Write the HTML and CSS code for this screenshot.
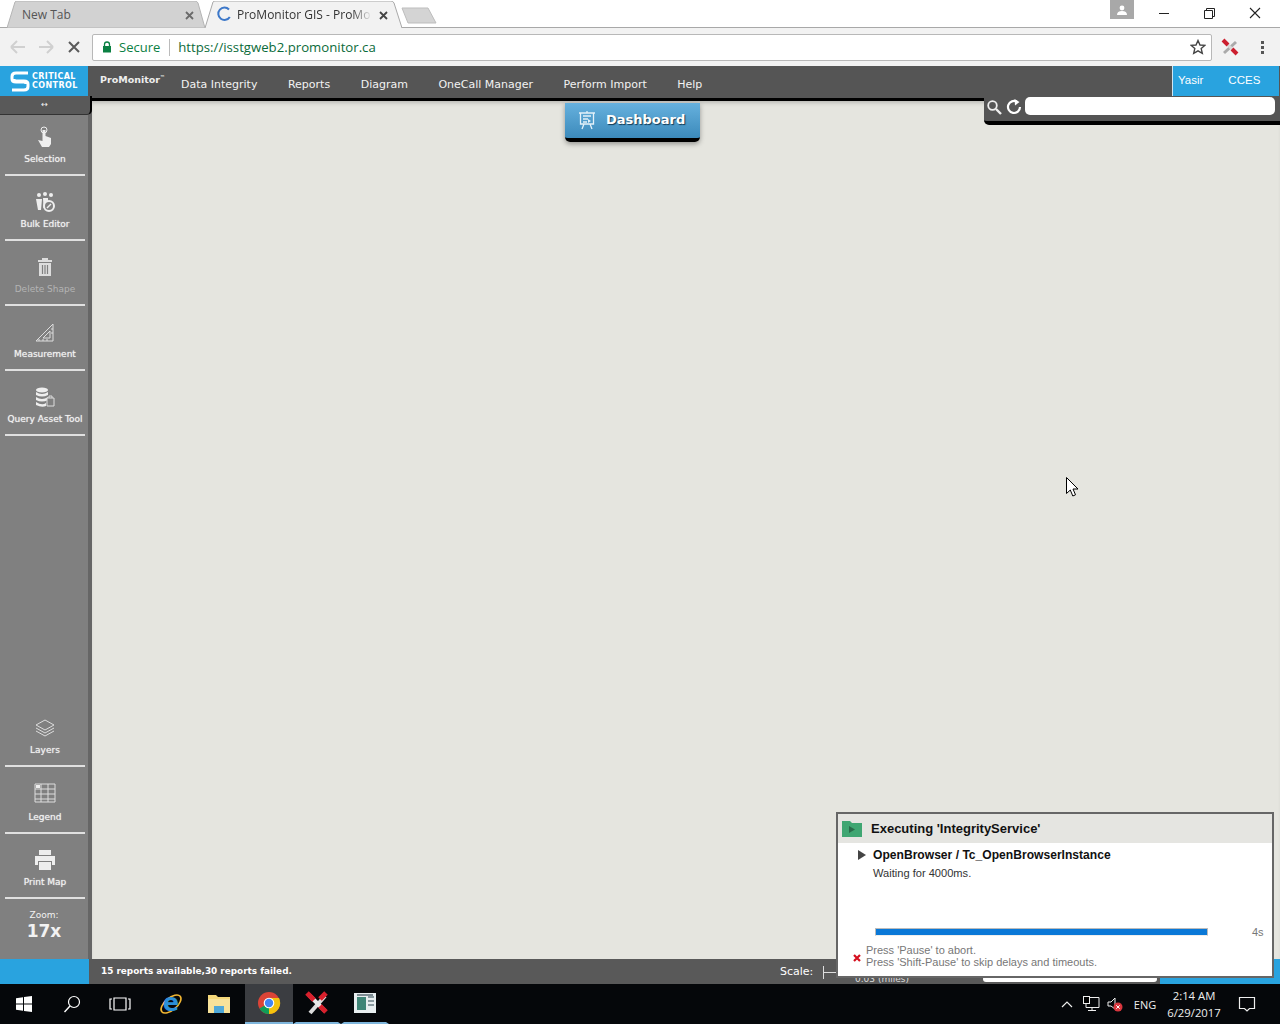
FILE: index.html
```html
<!DOCTYPE html>
<html lang="en">
<head>
    <meta charset="UTF-8">
    <title>ProMonitor GIS - ProMonitor</title>
    <link rel="stylesheet" href="styles.css">
</head>
<body>
<div class="screen">
    <div class="tabstrip">
        <div class="tab tab-back">
            <svg class="tab-shape" viewBox="0 0 198 27" preserveAspectRatio="none"><path d="M0 27 L8 1 Q8.500 0 10 0 H188 Q190 0 191 2 L198 27 Z" fill="#d2d2d2" stroke="#b4b4b4"/></svg>
            <span class="tab-title">New Tab</span>
            <svg class="tab-close" viewBox="0 0 9 9"><path d="M1 1 L8 8 M8 1 L1 8" stroke="#6a6a6a" stroke-width="1.800"/></svg>
        </div>
        <div class="tab tab-front">
            <svg class="tab-shape" viewBox="0 0 197 27" preserveAspectRatio="none"><path d="M0 27 L8 1 Q8.500 0 10 0 H186 Q188 0 189 2 L197 27" fill="#f2f2f2" stroke="#a8a8a8"/></svg>
            <svg class="spinner" viewBox="0 0 16 16"><path d="M13 3.500 A6.200 6.200 0 1 0 13.800 11" fill="none" stroke="#3d78c9" stroke-width="2"/></svg>
            <span class="tab-title tab-fade">ProMonitor GIS - ProMo</span>
            <svg class="tab-close" viewBox="0 0 9 9"><path d="M1 1 L8 8 M8 1 L1 8" stroke="#444" stroke-width="1.800"/></svg>
        </div>
        <svg class="newtab" viewBox="0 0 36 17"><path d="M1 1 H27 L35 16 H7 Z" fill="#d4d4d4" stroke="#bdbdbd"/></svg>
        <div class="window-controls">
            <div class="profile"><svg viewBox="0 0 12 10" width="12" height="10"><circle cx="6" cy="3" r="2.400" fill="#fff"/><path d="M1 10 Q1 6 6 6 Q11 6 11 10 Z" fill="#fff"/></svg></div>
            <svg class="winbtn" viewBox="0 0 46 18"><path d="M19 8.500 H29" stroke="#222"/></svg>
            <svg class="winbtn" viewBox="0 0 46 18"><path d="M18.500 5.500 H26.500 V13.500 H18.500 Z M20.500 5.500 V3.500 H28.500 V11.500 H26.500" fill="none" stroke="#222"/></svg>
            <svg class="winbtn" viewBox="0 0 46 18"><path d="M18 3 L28 13 M28 3 L18 13" stroke="#222" stroke-width="1.100"/></svg>
        </div>
    </div>

    <div class="toolbar">
        <svg class="navbtn" viewBox="0 0 28 28"><path d="M7 14 H21 M7 14 L13 8 M7 14 L13 20" fill="none" stroke="#d0d0d0" stroke-width="2"/></svg>
        <svg class="navbtn" viewBox="0 0 28 28"><path d="M7 14 H21 M21 14 L15 8 M21 14 L15 20" fill="none" stroke="#d0d0d0" stroke-width="2"/></svg>
        <svg class="navbtn" viewBox="0 0 28 28"><path d="M9 9 L19 19 M19 9 L9 19" fill="none" stroke="#5a5a5a" stroke-width="2"/></svg>
        <div class="omnibox">
            <svg class="lock" viewBox="0 0 10 12"><path d="M2.500 5 V3.500 A2.500 2.500 0 0 1 7.500 3.500 V5" fill="none" stroke="#0b8043" stroke-width="1.300"/><rect x="1" y="5" width="8" height="6.500" fill="#0b8043"/></svg>
            <span class="secure">Secure</span>
            <span class="url">https://isstgweb2.promonitor.ca</span>
            <svg class="star" viewBox="0 0 16 16"><path d="M8 1.500 L10 6 L14.800 6.400 L11.200 9.600 L12.300 14.300 L8 11.800 L3.700 14.300 L4.800 9.600 L1.200 6.400 L6 6 Z" fill="none" stroke="#444" stroke-width="1.400"/></svg>
        </div>
        <svg class="ext" viewBox="0 0 18 18"><path d="M3 15 L15 4" stroke="#aaa" stroke-width="3"/><path d="M3 3 L15 15" stroke="#d8d8d8" stroke-width="3"/><path d="M2 2 L7 7 M11 11 L16 16" stroke="#cc1f2f" stroke-width="4"/></svg>
        <div class="dots"><i></i><i></i><i></i></div>
    </div>

    <div class="app">
        <div class="appnav">
            <div class="logo">
                <svg viewBox="0 0 20 23" width="20" height="23"><path d="M18 3 H6 Q2 3 2 6.500 V9 Q2 12 6 12 H14 Q16 12 16 14 M2 20 H14 Q18 20 18 16.500 V14 Q18 11 14 11 H6 Q4 11 4 9" fill="none" stroke="#fff" stroke-width="3"/></svg>
                <div class="logo-text">CRITICAL<br>CONTROL</div>
            </div>
            <span class="brand">ProMonitor<sup>™</sup></span>
            <div class="menu">
                <span>Data Integrity</span>
                <span>Reports</span>
                <span>Diagram</span>
                <span>OneCall Manager</span>
                <span>Perform Import</span>
                <span>Help</span>
            </div>
            <div class="account">
                <span>Yasir</span>
                <span>CCES</span>
            </div>
        </div>

        <div class="workspace">
            <div class="sidebar">
                <div class="tools">
                    <div class="collapser">↔</div>
                    <div class="tool first">
                        <svg viewBox="0 0 22 22"><circle cx="10" cy="4" r="3" fill="none" stroke="#eee"/><path d="M8.500 4 H11.500 V10 L17 12 V18 L15 21 H8 L4 14 L8.500 15 Z" fill="#eee"/></svg>
                        <span>Selection</span>
                    </div>
                    <div class="tool">
                        <svg viewBox="0 0 22 22"><circle cx="5" cy="4" r="2" fill="#eee"/><circle cx="11" cy="3" r="2" fill="#eee"/><circle cx="17" cy="4" r="2" fill="#eee"/><path d="M2 8 H8 L7 19 H4 Z M9 7 H14 V11 L11 14 V17 H9.500 Z" fill="#eee"/><circle cx="15" cy="15" r="5" fill="#808080" stroke="#eee" stroke-width="2"/><path d="M13 17 L17 13" stroke="#eee" stroke-width="1.500"/></svg>
                        <span>Bulk Editor</span>
                    </div>
                    <div class="tool disabled">
                        <svg viewBox="0 0 22 22"><path d="M4 4 H18 V6 H4 Z M8 4 V2 H14 V4" fill="#ddd"/><path d="M5 7 H17 V20 H5 Z" fill="#ddd"/><path d="M8.500 9 V18 M11 9 V18 M13.500 9 V18" stroke="#808080" stroke-width="1.200"/></svg>
                        <span>Delete Shape</span>
                    </div>
                    <div class="tool">
                        <svg viewBox="0 0 22 22"><path d="M2 20 L19 3 V20 Z M9 17 L16 10 V17 Z" fill="none" stroke="#ddd"/><path d="M5 20 V18 M9 20 V18 M13 20 V18 M19 8 H17 M19 12 H17" stroke="#ddd"/></svg>
                        <span>Measurement</span>
                    </div>
                    <div class="tool">
                        <svg viewBox="0 0 22 22"><ellipse cx="8" cy="4" rx="6" ry="2.500" fill="#eee"/><path d="M2 6 Q8 10 14 6 V9 Q8 12 2 9 Z M2 11 Q8 15 14 11 V14 Q8 17 2 14 Z M2 16 Q8 20 12 17 V20 Q8 22 2 19 Z" fill="#eee"/><path d="M13 12 H20 V20 H13 Z" fill="#808080" stroke="#ddd"/><path d="M15 12 V10 H18 V12" fill="none" stroke="#ddd"/></svg>
                        <span>Query Asset Tool</span>
                    </div>
                </div>
                <div class="tools">
                    <div class="tool">
                        <svg viewBox="0 0 22 22"><path d="M11 3 L20 8 L11 13 L2 8 Z" fill="none" stroke="#ddd"/><path d="M2 11 L11 16 L20 11 M2 14 L11 19 L20 14" fill="none" stroke="#ddd"/></svg>
                        <span>Layers</span>
                    </div>
                    <div class="tool legend">
                        <svg viewBox="0 0 22 22"><path d="M1 2 H21 V20 H1 Z M1 7 H21 M1 12 H21 M1 17 H21 M7 2 V20 M14 2 V20" fill="none" stroke="#ddd"/><rect x="2" y="3" width="4" height="3" fill="#eee"/></svg>
                        <span>Legend</span>
                    </div>
                    <div class="tool">
                        <svg viewBox="0 0 22 22"><path d="M5 1 H17 V6 H5 Z M1 7 H21 V16 H18 V12 H4 V16 H1 Z M5 13 H17 V21 H5 Z" fill="#eee"/></svg>
                        <span>Print Map</span>
                    </div>
                    <div class="zoom">
                        <span>Zoom:</span>
                        <strong>17x</strong>
                    </div>
                </div>
            </div>
            <div class="map"></div>
        </div>

        <div class="statusbar">
            <div class="status-blue"></div>
            <span class="status-text">15 reports available,30 reports failed.</span>
            <span class="scale">Scale:</span>
            <span class="scale-line"></span>
            <span class="miles">0.03 (miles)</span>
            <span class="coords"></span>
            <div class="status-right"></div>
        </div>
    </div>

    <div class="taskbar">
        <div class="task start"><svg viewBox="0 0 16 16" width="16" height="16"><path d="M0 2.300 L7 1.300 V7.600 H0 Z M8 1.100 L16 0 V7.600 H8 Z M0 8.400 H7 V14.700 L0 13.700 Z M8 8.400 H16 V16 L8 14.900 Z" fill="#fff"/></svg></div>
        <div class="task"><svg viewBox="0 0 18 18" width="18" height="18"><circle cx="11" cy="7" r="5.500" fill="none" stroke="#fff" stroke-width="1.200"/><path d="M7 11 L1.500 17" stroke="#fff" stroke-width="1.400"/></svg></div>
        <div class="task"><svg viewBox="0 0 22 14" width="22" height="14"><path d="M5 1 H17 V13 H5 Z M3 2 H1 V12 H3 M19 2 H21 V12 H19" fill="none" stroke="#fff" stroke-width="1.200"/></svg></div>
        <div class="task ie">
            <svg viewBox="-3 -3 32 32" width="32" height="32"><ellipse cx="13" cy="13" rx="12" ry="6" transform="rotate(-40 13 13)" fill="none" stroke="#f2b632" stroke-width="1.600"/><text x="13" y="19.500" text-anchor="middle" class="ie-letter">e</text></svg>
        </div>
        <div class="task"><svg viewBox="0 0 22 20" width="22" height="20"><path d="M0 1 H8 L10 3 H22 V19 H0 Z" fill="#f4d77a"/><path d="M0 5 H22 V19 H0 Z" fill="#f7e29a"/><path d="M6 12 H16 V19 H6 Z" fill="#4fa8d8"/></svg></div>
        <div class="task chrome active">
            <svg viewBox="0 0 24 24" width="24" height="24"><circle cx="12" cy="12" r="11" fill="#db4437"/><path d="M12 12 L2.500 17.500 A11 11 0 0 0 12 23 L17.500 21 Z" fill="#0f9d58"/><path d="M12 7 H22 A11 11 0 0 1 12 23 Z" fill="#f4c20d"/><circle cx="12" cy="12" r="5.300" fill="#fff"/><circle cx="12" cy="12" r="4.200" fill="#4285f4"/></svg>
        </div>
        <div class="task running"><svg viewBox="0 0 24 24" width="24" height="24"><path d="M5 22 L20 5" stroke="#ddd" stroke-width="4"/><path d="M4 4 L20 20" stroke="#e8e8e8" stroke-width="4"/><path d="M2 2 L9 9 M15 15 L21 21 M15 8 L21 2" stroke="#d8202c" stroke-width="5"/></svg></div>
        <div class="task running"><svg viewBox="0 0 22 20" width="22" height="20"><rect width="22" height="20" fill="#e8eef0"/><rect x="3" y="4" width="9" height="13" fill="#3f8577"/><path d="M14 4 H20 M14 8 H20 M14 12 H20" stroke="#8a9aa0" stroke-width="2"/><rect x="3" y="1" width="16" height="2" fill="#7d8b92"/></svg></div>
        <div class="tray">
            <svg class="tray-icon" viewBox="0 0 24 16"><path d="M7 11 L12 6 L17 11" fill="none" stroke="#eee" stroke-width="1.200"/></svg>
            <svg class="tray-icon" viewBox="0 0 24 16"><path d="M7 1.500 H20 V11.500 H7 Z M13 11.500 V14.500 M9 14.500 H17" fill="none" stroke="#eee"/><rect x="4.500" y="0.500" width="6" height="7" fill="#000" stroke="#eee"/></svg>
            <svg class="tray-icon" viewBox="0 0 24 16"><path d="M5 6 H8 L12 2 V13 L8 10 H5 Z" fill="none" stroke="#eee"/><circle cx="15" cy="11" r="4.500" fill="#d9363e"/><path d="M13.300 9.300 L16.700 12.700 M16.700 9.300 L13.300 12.700" stroke="#fff"/></svg>
            <span class="lang">ENG</span>
            <div class="clock">
                <span>2:14 AM</span>
                <span>6/29/2017</span>
            </div>
            <svg class="notify" viewBox="0 0 18 18"><path d="M1.500 2.500 H16.500 V13.500 H11.500 L9 16 L6.500 13.500 H1.500 Z" fill="none" stroke="#eee" stroke-width="1.200"/></svg>
        </div>
    </div>

    <!-- things floating over the map -->
    <div class="dashboard-btn">
        <svg viewBox="0 0 18 20" width="18" height="20"><path d="M1 3 H17 M2.500 3 V14 H15.500 V3 M6 14 L4 19 M12 14 L14 19 M9 1 V3" fill="none" stroke="#e4f1f9" stroke-width="1.300"/><path d="M5 6 H13 M5 9 H10 M5 12 H9" stroke="#e4f1f9" stroke-width="1.500"/><path d="M10 9 L13 11 L10 13 Z" fill="#e4f1f9"/></svg>
        <span>Dashboard</span>
    </div>

    <div class="searchbox">
        <svg viewBox="0 0 16 16" width="16" height="16"><circle cx="6.500" cy="6.500" r="4.300" fill="#555" stroke="#eee" stroke-width="1.800"/><path d="M10 10 L15 15" stroke="#eee" stroke-width="2.400"/></svg>
        <svg viewBox="0 0 16 16" width="16" height="16"><path d="M11 2.800 A6 6 0 1 0 14 8" fill="none" stroke="#fff" stroke-width="2.200"/><path d="M8.500 0 L13.500 3 L9 6.500 Z" fill="#fff"/></svg>
        <div class="search-input"></div>
    </div>

    <div class="runner">
        <div class="runner-head">
            <svg viewBox="0 0 20 16" width="20" height="16"><path d="M0 0 H8 L10 2 H20 V16 H0 Z" fill="#3fa672"/><path d="M7 5 L13 8.500 L7 12 Z" fill="#2a6b4b"/></svg>
            <span>Executing 'IntegrityService'</span>
        </div>
        <div class="runner-body">
            <div class="runner-step"><i class="arrow"></i><span>OpenBrowser / Tc_OpenBrowserInstance</span></div>
            <div class="runner-wait">Waiting for 4000ms.</div>
            <div class="runner-progress">
                <div class="bar"><div class="bar-fill"></div></div>
                <span>4s</span>
            </div>
            <div class="runner-hint">
                <svg viewBox="0 0 8 8" width="8" height="8"><path d="M1 1 L7 7 M7 1 L1 7" stroke="#d5101f" stroke-width="2.200"/></svg>
                <div>Press 'Pause' to abort.<br>Press 'Shift-Pause' to skip delays and timeouts.</div>
            </div>
        </div>
    </div>

    <svg class="cursor" viewBox="0 0 13 20" width="13" height="20"><path d="M0.500 0.500 V16.500 L4.300 13 L6.800 19 L9.500 17.800 L7 12 H12 Z" fill="#fff" stroke="#000"/></svg>
</div>
</body>
</html>
```

FILE: styles.css
```css
* {
    box-sizing: border-box;
}
body {
    margin: 0;
    font-family: "Liberation Sans", Arial, sans-serif;
    overflow: hidden;
}
.screen {
    position: relative;
    width: 1280px;
    height: 1024px;
    display: flex;
    flex-direction: column;
    overflow: hidden;
    background: #fff;
}

/* browser tabs */
.tabstrip {
    height: 28px;
    display: flex;
    align-items: flex-end;
    padding-left: 7px;
    background: #fff;
    border-bottom: 1px solid #a8a8a8;
}
.tab {
    position: relative;
    height: 28px;
    display: flex;
    align-items: center;
    font-family: "Open Sans", sans-serif;
    font-size: 12px;
    margin-bottom: -1px;
}
.tab-shape {
    position: absolute;
    left: 0;
    top: 1px;
    width: 100%;
    height: 27px;
}
.tab-back {
    width: 198px;
    padding-left: 15px;
    color: #555;
}
.tab-front {
    width: 197px;
    padding-left: 11px;
    color: #333;
}
.tab-title {
    position: relative;
    flex: 1;
    white-space: nowrap;
}
.tab-fade {
    -webkit-mask-image: linear-gradient(to right, #000 85%, transparent);
    mask-image: linear-gradient(to right, #000 85%, transparent);
    margin-left: 5px;
}
.tab-close {
    position: relative;
    width: 9px;
    height: 9px;
    flex: none;
    margin: 2px 11px 0 11px;
}
.tab-front .tab-close {
    margin: 2px 14px 0 7px;
}
.spinner {
    position: relative;
    width: 16px;
    height: 16px;
    flex: none;
}
.newtab {
    width: 36px;
    height: 17px;
    margin: 0 0 3px -1px;
}
.window-controls {
    margin-left: auto;
    align-self: flex-start;
    display: flex;
    align-items: flex-start;
    padding-right: 2px;
}
.profile {
    width: 24px;
    height: 19px;
    margin-right: 6px;
    background: #a8a8a8;
    display: flex;
    align-items: center;
    justify-content: center;
}
.winbtn {
    width: 46px;
    height: 18px;
    margin-top: 5px;
}

/* address bar */
.toolbar {
    height: 38px;
    display: flex;
    align-items: center;
    padding-left: 4px;
    background: #f2f2f2;
}
.navbtn {
    width: 28px;
    height: 28px;
    flex: none;
}
.omnibox {
    width: 1120px;
    height: 27px;
    margin-left: 4px;
    display: flex;
    align-items: center;
    padding: 0 5px 0 9px;
    background: #fff;
    border: 1px solid #b8b8b8;
    border-radius: 2px;
    font-family: "Open Sans", sans-serif;
    font-size: 13px;
}
.lock {
    width: 10px;
    height: 12px;
    flex: none;
}
.secure {
    margin-left: 7px;
    padding-right: 9px;
    color: #0b8043;
    border-right: 1px solid #bbb;
    line-height: 17px;
}
.url {
    margin-left: 8px;
    font-size: 13.200px;
    color: #0b6b3a;
}
.star {
    width: 16px;
    height: 16px;
    margin-left: auto;
}
.ext {
    width: 18px;
    height: 18px;
    margin-left: 9px;
    flex: none;
}
.dots {
    margin-left: 22px;
    display: flex;
    flex-direction: column;
    gap: 2px;
}
.dots i {
    display: block;
    width: 3px;
    height: 3px;
    background: #555;
}

/* app top menu */
.app {
    flex: 1;
    display: flex;
    flex-direction: column;
    min-height: 0;
}
.appnav {
    height: 30px;
    flex: none;
    display: flex;
    background: #555;
    color: #fff;
    font-family: "DejaVu Sans", sans-serif;
}
.logo {
    width: 88px;
    flex: none;
    display: flex;
    align-items: center;
    gap: 2px;
    padding-left: 10px;
    background: #29a3df;
}
.logo-text {
    font-size: 8px;
    line-height: 9px;
    font-weight: bold;
    letter-spacing: 0.4px;
}
.brand {
    margin-left: 12px;
    margin-top: 8px;
    width: 81px;
    font-size: 9.500px;
    font-weight: bold;
    color: #eee;
}
.brand sup {
    font-size: 5px;
}
.menu {
    display: flex;
    gap: 30.500px;
    padding-top: 12px;
    font-size: 11px;
    color: #f2f2f2;
}
.account {
    margin-left: auto;
    width: 107px;
    margin-right: 1px;
    display: flex;
    gap: 25px;
    padding: 8px 0 0 5px;
    background: #29a3df;
    border-left: 1px solid #cfe6f3;
    font-family: "Liberation Sans", sans-serif;
    font-size: 11.500px;
}

/* left toolbar */
.workspace {
    flex: 1;
    display: flex;
    min-height: 0;
}
.sidebar {
    width: 92px;
    flex: none;
    display: flex;
    flex-direction: column;
    justify-content: space-between;
    background: #808080;
    border-right: 4px solid #666;
    color: #f2f2f2;
    font-family: "DejaVu Sans", sans-serif;
}
.collapser {
    height: 19px;
    margin-right: -4px;
    padding-right: 1px;
    text-align: center;
    font-size: 8px;
    line-height: 18px;
    background: #595959;
    border-right: 2px solid #000;
    border-bottom: 1px solid #333;
    border-bottom-right-radius: 5px;
}
.tools {
    display: flex;
    flex-direction: column;
}
.tool {
    height: 65px;
    padding-top: 15px;
    display: flex;
    flex-direction: column;
    align-items: center;
    margin: 0 3px 0 5px;
    border-bottom: 2px solid #e0e0e0;
    font-size: 9px;
    white-space: nowrap;
    text-shadow: 0 0 1px #ddd;
}
.tool svg {
    width: 22px;
    height: 22px;
    flex: none;
    margin-bottom: 6px;
}
.tool.first {
    height: 61px;
    padding-top: 11px;
}
.tool.legend {
    height: 67px;
}
.tool.legend svg {
    margin-bottom: 8px;
}
.tool.disabled {
    color: #b4b4b4;
    text-shadow: none;
}
.zoom {
    height: 60px;
    padding-top: 11px;
    display: flex;
    flex-direction: column;
    align-items: center;
    font-size: 9px;
}
.zoom strong {
    font-size: 17px;
    line-height: 20px;
    margin-top: 1px;
}
.map {
    flex: 1;
    background: #e5e5df;
    box-shadow: inset 0 2px 0 #555, inset 0 5px 0 #000, inset 0 9px 5px -3px rgba(0, 0, 0, 0.25);
}

/* status bar */
.statusbar {
    position: relative;
    height: 25px;
    flex: none;
    display: flex;
    background: #595959;
    color: #fff;
    font-family: "DejaVu Sans", sans-serif;
    overflow: hidden;
}
.status-blue {
    width: 89px;
    background: #29a3df;
}
.status-text {
    margin: 7px 0 0 12px;
    width: 679px;
    font-size: 8.900px;
    font-weight: bold;
}
.scale {
    margin-top: 6px;
    width: 43px;
    font-size: 11px;
}
.scale-line {
    width: 14px;
    height: 13px;
    margin-top: 7px;
    border-left: 1px solid #ddd;
    background: linear-gradient(#ddd, #ddd) no-repeat 0 6px / 100% 1px;
}
.miles {
    margin: 15px 0 0 18px;
    width: 128px;
    font-size: 9px;
    color: #ddd;
}
.coords {
    width: 174px;
    height: 6px;
    margin-top: 17px;
    background: #fff;
    border-radius: 3px;
}
.status-right {
    width: 120px;
    margin-left: 3px;
    background: #29a3df;
}

/* windows taskbar */
.taskbar {
    height: 40px;
    flex: none;
    display: flex;
    background: #05070a;
    color: #eee;
    font-family: "Open Sans", sans-serif;
    font-size: 11.300px;
}
.task {
    width: 48px;
    display: flex;
    align-items: center;
    justify-content: center;
    flex: none;
}
.task.ie {
    margin-left: 3px;
}
.task.chrome {
    margin-left: 2px;
}
.ie-letter {
    font-family: "DejaVu Sans", sans-serif;
    font-size: 24px;
    font-weight: bold;
    fill: #2b8fd8;
}
.active {
    background: #3b3d41;
    border-bottom: 2px solid #7fb6dc;
}
.running {
    margin: 0;
    border-bottom: 2px solid #7fb6dc;
    border-left: 3px solid #05070a;
    border-right: 3px solid #05070a;
}
.tray {
    margin-left: auto;
    display: flex;
    align-items: center;
    padding-right: 11px;
}
.tray-icon {
    width: 24px;
    height: 16px;
}
.lang {
    width: 36px;
    text-align: center;
    font-size: 11px;
}
.clock {
    width: 62px;
    display: flex;
    flex-direction: column;
    align-items: center;
    line-height: 17px;
}
.notify {
    width: 18px;
    height: 18px;
    margin: 0 13px;
}

/* floating bits */
.dashboard-btn {
    position: absolute;
    left: 565px;
    top: 103px;
    width: 135px;
    height: 39px;
    display: flex;
    align-items: center;
    gap: 10px;
    padding: 0 0 2px 13px;
    background: linear-gradient(#66b1de, #3c8abb);
    border-bottom: 4px solid #000;
    border-radius: 0 0 5px 5px;
    box-shadow: 0 2px 5px rgba(0, 0, 0, 0.35);
    color: #fff;
    font-family: "DejaVu Sans", sans-serif;
    font-size: 13px;
    font-weight: bold;
    text-shadow: 1px 1px 1px #123a55;
}
.searchbox {
    position: absolute;
    left: 984px;
    top: 96px;
    width: 296px;
    height: 29px;
    display: flex;
    align-items: flex-start;
    gap: 4px;
    padding: 2px 5px 0 2px;
    background: #555;
    border-bottom: 4px solid #000;
    border-bottom-left-radius: 5px;
}
.searchbox svg {
    margin-top: 1px;
    flex: none;
}
.search-input {
    flex: 1;
    height: 18px;
    margin-left: -1px;
    margin-top: -1px;
    background: #fff;
    border-radius: 5px;
}
.runner {
    position: absolute;
    left: 836px;
    top: 812px;
    width: 438px;
    height: 166px;
    background: #fff;
    border: 2px solid #666;
    font-family: "Liberation Sans", sans-serif;
}
.runner-head {
    height: 29px;
    display: flex;
    align-items: center;
    gap: 9px;
    padding-left: 4px;
    background: #e5e5e1;
    font-size: 13px;
    font-weight: bold;
    color: #111;
}
.runner-body {
    padding: 4px 0 0 20px;
}
.runner-step {
    display: flex;
    align-items: center;
    gap: 7px;
    height: 16px;
    font-size: 12.100px;
    font-weight: bold;
    color: #111;
}
.arrow {
    width: 0;
    height: 0;
    border-left: 8px solid #444;
    border-top: 5px solid transparent;
    border-bottom: 5px solid transparent;
}
.runner-wait {
    margin: 4px 0 0 15px;
    font-size: 11.100px;
    color: #333;
}
.runner-progress {
    display: flex;
    align-items: center;
    margin: 47px 0 0 17px;
    font-size: 11px;
    color: #777;
}
.bar {
    width: 333px;
    height: 8px;
    border: 1px solid #bbb;
    border-bottom-color: #eee;
}
.bar-fill {
    height: 100%;
    background: #0a78d7;
}
.runner-progress span {
    margin-left: 44px;
}
.runner-hint {
    display: flex;
    align-items: center;
    gap: 5px;
    margin: 6px 0 0 -5px;
    font-size: 11px;
    line-height: 12px;
    color: #777;
}
.runner-hint svg {
    margin-top: 4px;
}
.cursor {
    position: absolute;
    left: 1066px;
    top: 477px;
}
```
